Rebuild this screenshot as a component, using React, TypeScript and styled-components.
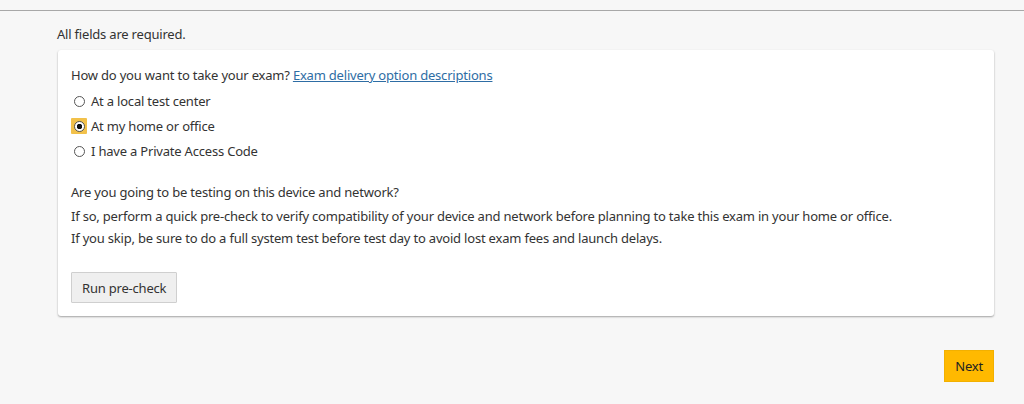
import React, { useState } from 'react';
import styled, { createGlobalStyle } from 'styled-components';

const GlobalStyle = createGlobalStyle`
  html, body {
    margin: 0;
    padding: 0;
    background: #f7f7f7;
  }
  body {
    font-family: "Noto Sans", "DejaVu Sans", sans-serif;
    font-size: 13px;
    letter-spacing: -0.2px;
    color: #333;
  }
`;

const Page = styled.div`
  border-top: 1px solid #a8a8a8;
  margin-top: 10px;
  padding: 13px 30px 0 58px;
  min-height: 393px;
  box-sizing: border-box;
`;

const Required = styled.p`
  margin: 0 0 6px -1px;
  line-height: 20px;
`;

const Card = styled.section`
  background: #fff;
  border-radius: 3px;
  box-shadow: 0 1px 2px rgba(0, 0, 0, 0.35);
  padding: 15px 13px 14px 13px;
  height: 266px;
  box-sizing: border-box;
`;

const Question = styled.p`
  margin: 0 0 6px;
  line-height: 20px;
`;

const DeliveryLink = styled.a`
  color: #2e6da4;
  text-decoration: underline;
`;

const OptionList = styled.div`
  display: flex;
  flex-direction: column;
  gap: 5px;
  margin-bottom: 20px;
`;

const Option = styled.label`
  display: flex;
  align-items: center;
  gap: 4px;
  line-height: 20px;
  cursor: pointer;
`;

const RadioWrap = styled.span<{ $focused: boolean }>`
  width: 16px;
  height: 16px;
  display: inline-flex;
  align-items: center;
  justify-content: center;
  background: ${p => (p.$focused ? '#f2c14a' : 'transparent')};
  border-radius: 1px;
`;

const RadioDot = styled.span<{ $checked: boolean }>`
  width: 9px;
  height: 9px;
  border-radius: 50%;
  border: 1px solid #555;
  background: ${p => (p.$checked ? 'radial-gradient(circle, #111 0 2.5px, #fff 3px)' : '#fff')};
`;

const Paragraph = styled.p`
  margin: 0;
  line-height: 22px;
`;

const Subtitle = styled(Paragraph)`
  margin-bottom: 2px;
`;

const PrecheckButton = styled.button`
  margin-top: 23px;
  font: inherit;
  letter-spacing: inherit;
  color: #333;
  background: #efefef;
  border: 1px solid #cfcfcf;
  border-radius: 1px;
  height: 31px;
  padding: 0 10px;
  cursor: pointer;
`;

const Footer = styled.div`
  display: flex;
  justify-content: flex-end;
  padding-top: 34px;
`;

const NextButton = styled.button`
  font: inherit;
  letter-spacing: inherit;
  color: #222;
  background: #ffb900;
  border: 1px solid #f2b000;
  height: 32px;
  padding: 0 10px;
  cursor: pointer;
`;

const options = [
  'At a local test center',
  'At my home or office',
  'I have a Private Access Code',
];

export default function App() {
  const [selected, setSelected] = useState(1);

  return (
    <>
      <GlobalStyle />
      <Page>
        <Required>All fields are required.</Required>
        <Card>
          <Question>
            How do you want to take your exam?{' '}
            <DeliveryLink href="#">Exam delivery option descriptions</DeliveryLink>
          </Question>
          <OptionList>
            {options.map((label, i) => (
              <Option key={label} onClick={() => setSelected(i)}>
                <RadioWrap $focused={selected === i}>
                  <RadioDot $checked={selected === i} />
                </RadioWrap>
                {label}
              </Option>
            ))}
          </OptionList>
          <Subtitle>Are you going to be testing on this device and network?</Subtitle>
          <Paragraph>
            If so, perform a quick pre-check to verify compatibility of your device and network before planning to take this exam in your home or office.
          </Paragraph>
          <Paragraph>
            If you skip, be sure to do a full system test before test day to avoid lost exam fees and launch delays.
          </Paragraph>
          <PrecheckButton>Run pre-check</PrecheckButton>
        </Card>
        <Footer>
          <NextButton>Next</NextButton>
        </Footer>
      </Page>
    </>
  );
}
